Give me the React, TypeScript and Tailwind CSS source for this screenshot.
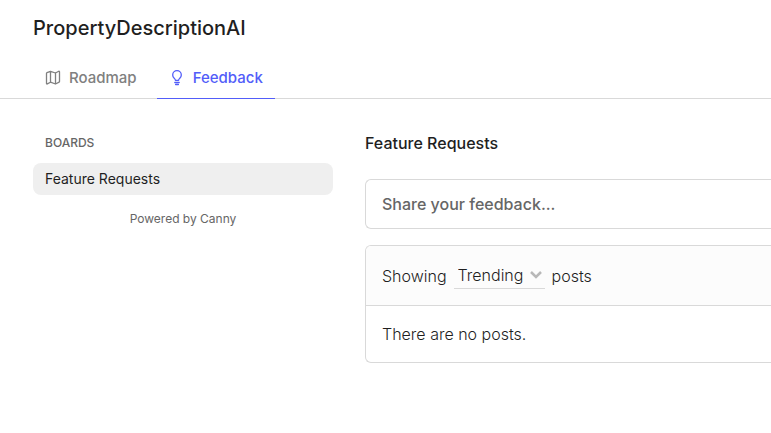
import { useState } from 'react'

const boards = [{ id: 'feature-requests', name: 'Feature Requests' }]

function RoadmapIcon() {
  return (
    <svg className="w-4 h-4" viewBox="0 0 16 16" fill="none" stroke="currentColor" strokeWidth="1.3" strokeLinejoin="round" strokeLinecap="round" aria-hidden="true">
      <path d="M5.5 1.5v10.7M10.5 3v10.8M1.5 3.3v10.2c0 .4.4.6.8.4l3.2-1.7 5 1.8 3.6-1.8c.3-.1.4-.3.4-.6V1.7c0-.4-.4-.6-.8-.4L10.500 3l-5-1.700L2 2.700c-.3.1-.5.3-.5.6z" />
    </svg>
  )
}

function FeedbackIcon() {
  return (
    <svg className="w-4 h-4" viewBox="0 0 16 16" fill="none" stroke="currentColor" strokeWidth="1.3" strokeLinejoin="round" strokeLinecap="round" aria-hidden="true">
      <path d="M6.4 10.3c0-1-.5-1.4-1.2-2.1A4.1 4.1 0 0 1 3.7 5a4.3 4.3 0 0 1 8.6 0c0 1.3-.6 2.3-1.5 3.2-.7.7-1.2 1.1-1.2 2.1z" />
      <path d="M5.8 12.5h4.4M6.6 14.5h2.8" />
    </svg>
  )
}

export default function App() {
  const [sort, setSort] = useState('Trending')
  const [title, setTitle] = useState('')

  return (
    <div className="min-h-screen bg-white font-[Inter,sans-serif] text-[#1f1f1f] overflow-x-hidden">
      <header className="border-b border-[#d9d9d9] pl-[33px] pt-3">
        <h1 className="text-xl leading-8 font-medium">PropertyDescriptionAI</h1>
        <nav className="flex gap-2 mt-3 -mb-px">
          <a href="#roadmap" className="flex items-center gap-2 h-[43px] pt-0.5 px-3 border-b border-transparent text-[15px] font-medium text-[#808080]">
            <RoadmapIcon />
            Roadmap
          </a>
          <a href="#feedback" aria-current="page" className="flex items-center gap-2 h-[43px] pt-0.5 px-3 border-b border-[#525df9] text-[15px] font-medium text-[#525df9]">
            <FeedbackIcon />
            Feedback
          </a>
        </nav>
      </header>

      <div className="flex gap-8 pl-[33px] pt-8">
        <aside className="w-[300px] shrink-0">
          <h2 className="px-3 text-xs leading-6 font-medium uppercase text-[#666]">Boards</h2>
          <ul className="mt-2">
            {boards.map(board => (
              <li key={board.id}>
                <a href={`#${board.id}`} className="block px-3 py-1 rounded-lg bg-[#efefef] text-sm leading-6">
                  {board.name}
                </a>
              </li>
            ))}
          </ul>
          <a href="#canny" className="block mt-3 text-center text-xs leading-6 text-[#666]">Powered by Canny</a>
        </aside>

        <main className="flex-1 min-w-0">
          <h2 className="text-base leading-6 font-medium">Feature Requests</h2>

          <input
            type="text"
            aria-label="Share your feedback"
            placeholder="Share your feedback..."
            value={title}
            onChange={e => setTitle(e.target.value)}
            className="block w-full h-[50px] mt-6 px-4 border border-r-0 border-[#d9d9d9] rounded-l-md text-base font-medium placeholder:text-[#666] outline-none"
          />

          <section className="mt-4 border border-r-0 border-[#d9d9d9] rounded-l-md overflow-hidden">
            <div className="flex items-center gap-[7px] h-[60px] px-4 border-b border-[#d9d9d9] bg-[#fcfcfc] font-light">
              <label htmlFor="sort">Showing</label>
              <div className="relative border-b border-[#d9d9d9]">
                <select
                  id="sort"
                  value={sort}
                  onChange={e => setSort(e.target.value)}
                  className="block appearance-none w-[91px] h-[26px] pl-1 pr-5 bg-transparent outline-none"
                >
                  <option>Trending</option>
                  <option>Top</option>
                  <option>New</option>
                </select>
                <svg className="absolute right-[3px] top-[9px] w-3 h-2 pointer-events-none" viewBox="0 0 12 8" fill="none" stroke="#b8b8b8" strokeWidth="2.5" aria-hidden="true">
                  <path d="m1 1 5 5 5-5" />
                </svg>
              </div>
              <span>posts</span>
            </div>
            <p className="px-4 py-4 leading-6 font-light">There are no posts.</p>
          </section>
        </main>
      </div>
    </div>
  )
}
